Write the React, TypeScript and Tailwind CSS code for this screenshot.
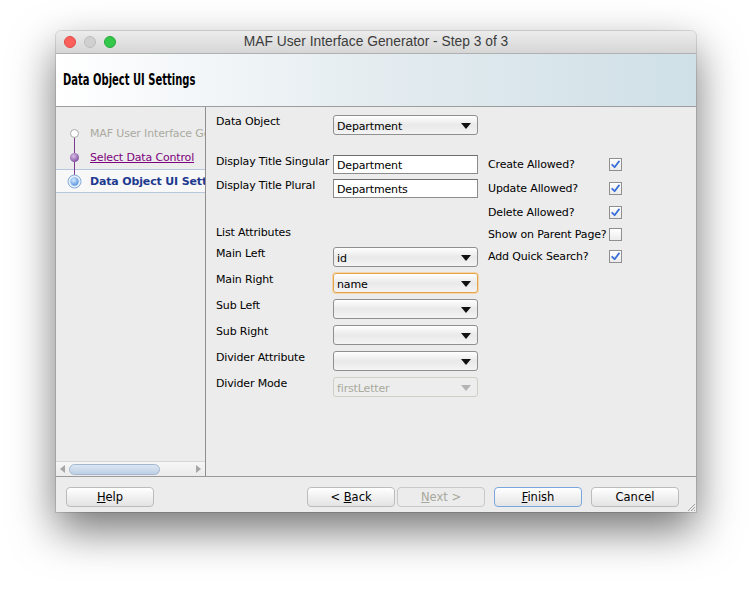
import React from "react";

function Arrow({ disabled }: { disabled?: boolean }) {
  return (
    <svg width="10" height="6" viewBox="0 0 10 6" className="absolute right-[6px] top-[7px]">
      <path d="M0 0 L10 0 L5 6 Z" fill={disabled ? "#b4b4b4" : "#111"} />
    </svg>
  );
}

function Combo({ value, focused, disabled }: { value?: string; focused?: boolean; disabled?: boolean }) {
  const border = focused
    ? "border-[#e2a34a] shadow-[0_0_0_1px_#f5d6a6]"
    : disabled
    ? "border-[#cfcfc6]"
    : "border-[#8f8f8f]";
  return (
    <div
      className={`relative h-[20px] w-[145px] rounded-[3px] border ${border} ${
        disabled ? "bg-[#ededed] text-[#a9a99c]" : "bg-gradient-to-b from-[#ffffff] via-[#e9e9e9] to-[#f4f4f4] text-black"
      } flex items-center pl-[3px] text-[11px] leading-none tracking-[-0.15px]`}
    >
      <span className="pt-[2px]">{value}</span>
      <Arrow disabled={disabled} />
    </div>
  );
}

function TextInput({ value }: { value: string }) {
  return (
    <div className="h-[19px] w-[145px] border border-[#8c8c8c] border-t-[#6e6e6e] bg-white flex items-center pl-[3px] text-[11px] leading-none tracking-[-0.15px] text-black">
      <span className="pt-[2px]">{value}</span>
    </div>
  );
}

function Check({ checked }: { checked?: boolean }) {
  return (
    <div className="w-[13px] h-[13px] border border-[#8f8f8f] bg-gradient-to-b from-[#ffffff] to-[#ececec] flex items-center justify-center">
      {checked && (
        <svg width="9" height="9" viewBox="0 0 9 9">
          <path d="M1.2 4.8 L3.6 7.2 L8 1.4" stroke="#3a6fd8" strokeWidth="1.8" fill="none" strokeLinecap="round" strokeLinejoin="round" />
        </svg>
      )}
    </div>
  );
}

function Btn({ children, variant }: { children: React.ReactNode; variant?: "default" | "disabled" }) {
  const cls =
    variant === "default"
      ? "border-[#7aa6de] text-black bg-gradient-to-b from-[#ffffff] to-[#e4e4e4]"
      : variant === "disabled"
      ? "border-[#c8c8c8] text-[#a8a89c] bg-[#ececec]"
      : "border-[#bcbcbc] text-black bg-gradient-to-b from-[#ffffff] to-[#e3e3e3]";
  return (
    <div className={`h-[20px] w-[88px] rounded-[4px] border ${cls} flex items-center justify-center text-[11.5px] leading-none pt-[1px]`}>
      {children}
    </div>
  );
}

function LabelRow({ label, children, mt }: { label: string; children: React.ReactNode; mt: string }) {
  return (
    <div className={`flex ${mt}`}>
      <div className="w-[117px] text-[11px] leading-[13px] tracking-[-0.15px] text-black whitespace-nowrap">{label}</div>
      {children}
    </div>
  );
}

function CheckRow({ label, checked, mt }: { label: string; checked?: boolean; mt: string }) {
  return (
    <div className={`flex items-center ${mt}`}>
      <div className="w-[121px] text-[11px] leading-[13px] tracking-[-0.15px] text-black whitespace-nowrap">{label}</div>
      <Check checked={checked} />
    </div>
  );
}

export default function App() {
  return (
    <div className="w-[752px] h-[592px] bg-white pt-[31px] pl-[56px] font-['DejaVu_Sans',sans-serif] overflow-hidden">
      <div className="w-[640px] h-[481px] flex flex-col rounded-t-[5px] overflow-hidden bg-[#ececec] shadow-[0_0_0_1px_rgba(0,0,0,0.12),0_18px_44px_rgba(0,0,0,0.55)]">
        {/* Title bar */}
        <div className="relative h-[23px] shrink-0 bg-gradient-to-b from-[#ececec] to-[#d6d6d6] border-b border-[#b0b0b0] flex items-center">
          <div className="flex items-center gap-[8px] pl-[8px]">
            <div className="w-[12px] h-[12px] rounded-full bg-[#fc605b] border border-[#de4a43]" />
            <div className="w-[12px] h-[12px] rounded-full bg-[#d0d0d0] border border-[#bdbdbd]" />
            <div className="w-[12px] h-[12px] rounded-full bg-[#34c84a] border border-[#25a83a]" />
          </div>
          <div className="absolute inset-0 flex items-center justify-center text-[13.8px] text-[#3c3c3c] font-['Liberation_Sans',sans-serif] pointer-events-none">
            MAF User Interface Generator - Step 3 of 3
          </div>
        </div>
        {/* Header */}
        <div className="h-[53px] shrink-0 bg-gradient-to-r from-[#ffffff] via-[#e4ecf0] to-[#cfe0e7] border-b border-[#9d9d9d] flex items-center pl-[7px]">
          <span className="inline-block origin-left scale-x-[0.74] text-[15px] font-bold text-black font-['DejaVu_Sans_Condensed','DejaVu_Sans',sans-serif] pt-[1px] whitespace-nowrap">
            Data Object UI Settings
          </span>
        </div>
        {/* Body */}
        <div className="flex h-[370px] shrink-0 border-b border-[#9a9a9a]">
          {/* Left nav */}
          <div className="w-[150px] shrink-0 border-r border-[#8e8e8e] flex flex-col">
            <div className="relative flex-1 pt-[14px] overflow-hidden">
              <div className="h-[24px] flex items-center pl-[34px] pt-[2px] text-[11px] tracking-[-0.15px] text-[#aaaaa0] whitespace-nowrap overflow-hidden">
                MAF User Interface Generator
              </div>
              <div className="h-[24px] flex items-center pl-[34px] pt-[2px] text-[11px] tracking-[-0.15px] text-[#7d007d] underline whitespace-nowrap">
                Select Data Control
              </div>
              <div className="h-[24px] flex items-center pl-[34px] pt-[2px] text-[11px] tracking-[-0.15px] font-bold text-[#1e3a8f] whitespace-nowrap overflow-hidden bg-[#f8f8f8] border-y border-[#b7c7dc]">
                Data Object UI Settings
              </div>
              <svg width="30" height="80" className="absolute left-0 top-[14px] z-10" viewBox="0 0 30 80">
                <defs>
                  <radialGradient id="pg" cx="40%" cy="35%" r="70%">
                    <stop offset="0%" stopColor="#d8bfe6" />
                    <stop offset="100%" stopColor="#7d4b9e" />
                  </radialGradient>
                  <radialGradient id="bg" cx="40%" cy="35%" r="70%">
                    <stop offset="0%" stopColor="#d9ecff" />
                    <stop offset="100%" stopColor="#4d8fdc" />
                  </radialGradient>
                </defs>
                <line x1="18.5" y1="16" x2="18.5" y2="56" stroke="#7b3c8e" strokeWidth="1" />
                <circle cx="18.5" cy="12.5" r="4" fill="#fff" stroke="#a9a9a9" />
                <circle cx="18.5" cy="36.5" r="4.5" fill="url(#pg)" />
                <circle cx="18.5" cy="60.5" r="6.5" fill="#e4eefa" stroke="#86acd8" />
                <circle cx="18.5" cy="60.5" r="4.2" fill="url(#bg)" />
              </svg>
            </div>
            {/* scrollbar */}
            <div className="h-[15px] shrink-0 bg-gradient-to-b from-[#f6f6f6] to-[#ebebeb] border-t border-[#d6d6d6] flex items-center px-[4px]">
              <svg width="5" height="8" viewBox="0 0 5 8"><path d="M5 0 L0 4 L5 8 Z" fill="#a6a6a6" /></svg>
              <div className="ml-[4px] w-[91px] h-[11px] rounded-full border border-[#a3b7cf] bg-gradient-to-b from-[#dbe6f3] to-[#bfd0e5]" />
              <div className="flex-1" />
              <svg width="5" height="8" viewBox="0 0 5 8"><path d="M0 0 L5 4 L0 8 Z" fill="#a6a6a6" /></svg>
            </div>
          </div>
          {/* Form */}
          <div className="flex-1 flex pl-[10px]">
            <div className="w-[272px] shrink-0 flex flex-col pt-[8px]">
              <LabelRow label="Data Object" mt="mt-0">
                <Combo value="Department" />
              </LabelRow>
              <LabelRow label="Display Title Singular" mt="mt-[20px]">
                <TextInput value="Department" />
              </LabelRow>
              <LabelRow label="Display Title Plural" mt="mt-[5px]">
                <TextInput value="Departments" />
              </LabelRow>
              <div className="mt-[28px] text-[11px] leading-[13px] tracking-[-0.15px] text-black">List Attributes</div>
              <LabelRow label="Main Left" mt="mt-[8px]">
                <Combo value="id" />
              </LabelRow>
              <LabelRow label="Main Right" mt="mt-[6px]">
                <Combo value="name" focused />
              </LabelRow>
              <LabelRow label="Sub Left" mt="mt-[6px]">
                <Combo />
              </LabelRow>
              <LabelRow label="Sub Right" mt="mt-[6px]">
                <Combo />
              </LabelRow>
              <LabelRow label="Divider Attribute" mt="mt-[6px]">
                <Combo />
              </LabelRow>
              <LabelRow label="Divider Mode" mt="mt-[6px]">
                <Combo value="firstLetter" disabled />
              </LabelRow>
            </div>
            <div className="flex flex-col pt-[51px]">
              <CheckRow label="Create Allowed?" checked mt="mt-0" />
              <CheckRow label="Update Allowed?" checked mt="mt-[11px]" />
              <CheckRow label="Delete Allowed?" checked mt="mt-[11px]" />
              <CheckRow label="Show on Parent Page?" mt="mt-[9px]" />
              <CheckRow label="Add Quick Search?" checked mt="mt-[9px]" />
            </div>
          </div>
        </div>
        {/* Footer */}
        <div className="flex-1 flex items-start pt-[10px] pl-[10px] pr-[17px] relative">
          <Btn>
            <span><span className="underline">H</span>elp</span>
          </Btn>
          <div className="flex-1" />
          <Btn>
            <span>&lt; <span className="underline">B</span>ack</span>
          </Btn>
          <div className="w-[2px]" />
          <Btn variant="disabled">
            <span><span className="underline">N</span>ext &gt;</span>
          </Btn>
          <div className="w-[9px]" />
          <Btn variant="default">
            <span><span className="underline">F</span>inish</span>
          </Btn>
          <div className="w-[9px]" />
          <Btn>Cancel</Btn>
          <svg width="8" height="8" viewBox="0 0 8 8" className="absolute right-[1px] bottom-[1px]">
            <path d="M8 1 L1 8 M8 4 L4 8 M8 7 L7 8" stroke="#a0a0a0" strokeWidth="1" />
          </svg>
        </div>
      </div>
    </div>
  );
}
